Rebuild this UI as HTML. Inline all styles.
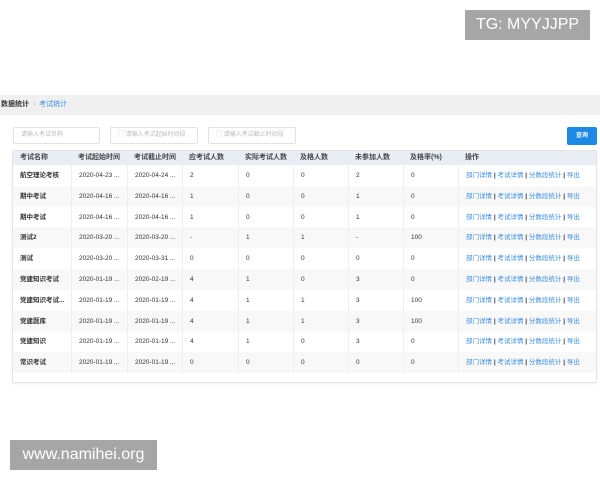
<!DOCTYPE html>
<html><head><meta charset="utf-8"><style>
*{margin:0;padding:0;box-sizing:border-box}
body{width:600px;height:480px;background:#fff;position:relative;overflow:hidden;font-family:"Liberation Sans","Noto Sans CJK SC",sans-serif;color:#333}
.tg{position:absolute;left:465px;top:10px;width:125px;height:30px;background:#a6a6a6;color:#fff;font-size:16px;line-height:30px;text-align:center}
.wm{position:absolute;left:10px;top:440px;width:147px;height:30px;background:#a6a6a6;color:#fff;font-size:16px;line-height:30px;text-align:center}
.bc{position:absolute;left:0;top:95px;width:600px;height:20px;background:#f0f0f0;font-size:7px;line-height:20px;padding-left:1px;font-weight:bold}
.bc span{color:#3a8ee6;font-weight:normal}
.inp{position:absolute;top:127px;height:17px;border:1px solid #e2e2e2;border-radius:2px;font-size:6px;color:#bbb;line-height:15px;padding-left:7px}
.btn{position:absolute;left:567px;top:127px;width:30px;height:18px;background:#1e88e5;border-radius:2px;color:#fff;font-size:6px;line-height:18px;text-align:center;font-weight:bold}
.tbl{position:absolute;left:12px;top:150px;width:585px;height:233px;border:1px solid #e4e4e4;border-radius:2px;box-shadow:0 1px 2px rgba(0,0,0,.06)}
.row{position:absolute;left:0;width:583px;height:21px;font-size:6.5px;line-height:21px}
.hd{background:#e9eef4;height:14px;line-height:14px;font-weight:bold;font-size:7px;color:#444}
.row div{position:absolute;top:0;height:100%;padding-left:7px;white-space:nowrap;border-left:1px solid #eee}
.hd div{border-left:none}
.alt{background:#f8f8f8}
.op{color:#3a8ee6}
.op b{color:#333;font-weight:bold}
</style></head><body>
<div class="tg">TG: MYYJJPP</div>
<div class="bc">数据统计 <span style="color:#aaa">&nbsp;›&nbsp;</span> <span>考试统计</span></div>
<div class="inp" style="left:13px;width:87px">请输入考试名称</div>
<div class="inp" style="left:110px;width:88px">▢ 请输入考试起始时间段</div>
<div class="inp" style="left:208px;width:88px">▢ 请输入考试截止时间段</div>
<div class="btn">查询</div>
<div class="tbl" id="t"></div>
<div class="wm">www.namihei.org</div>
<script>
var L=[0,58,114,169,225,280,335,390,445];
var H=["考试名称","考试起始时间","考试截止时间","应考试人数","实际考试人数","及格人数","未参加人数","及格率(%)","操作"];
var R=[["航空理论考核","2020-04-23 ...","2020-04-24 ...","2","0","0","2","0"],
["期中考试","2020-04-16 ...","2020-04-16 ...","1","0","0","1","0"],
["期中考试","2020-04-16 ...","2020-04-16 ...","1","0","0","1","0"],
["测试2","2020-03-20 ...","2020-03-20 ...","-","1","1","-","100"],
["测试","2020-03-20 ...","2020-03-31 ...","0","0","0","0","0"],
["党建知识考试","2020-01-19 ...","2020-02-19 ...","4","1","0","3","0"],
["党建知识考试...","2020-01-19 ...","2020-01-19 ...","4","1","1","3","100"],
["党建题库","2020-01-19 ...","2020-01-19 ...","4","1","1","3","100"],
["党建知识","2020-01-19 ...","2020-01-19 ...","4","1","0","3","0"],
["常识考试","2020-01-19 ...","2020-01-19 ...","0","0","0","0","0"]];
var h='<div class="row hd" style="top:0">';
H.forEach(function(t,i){h+='<div style="left:'+L[i]+'px">'+t+'</div>'});
h+='</div>';
R.forEach(function(r,j){
 h+='<div class="row'+(j%2?' alt':'')+'" style="top:'+(14+j*20.8)+'px">';
 r.forEach(function(t,i){h+='<div style="left:'+L[i]+'px;'+(i==0?'border-left:none;font-weight:bold':'')+'">'+t+'</div>'});
 h+='<div class="op" style="left:445px">部门详情 <b>|</b> 考试详情 <b>|</b> 分数段统计 <b>|</b> 导出</div></div>';
});
document.getElementById('t').innerHTML=h;
</script>
</body></html>
